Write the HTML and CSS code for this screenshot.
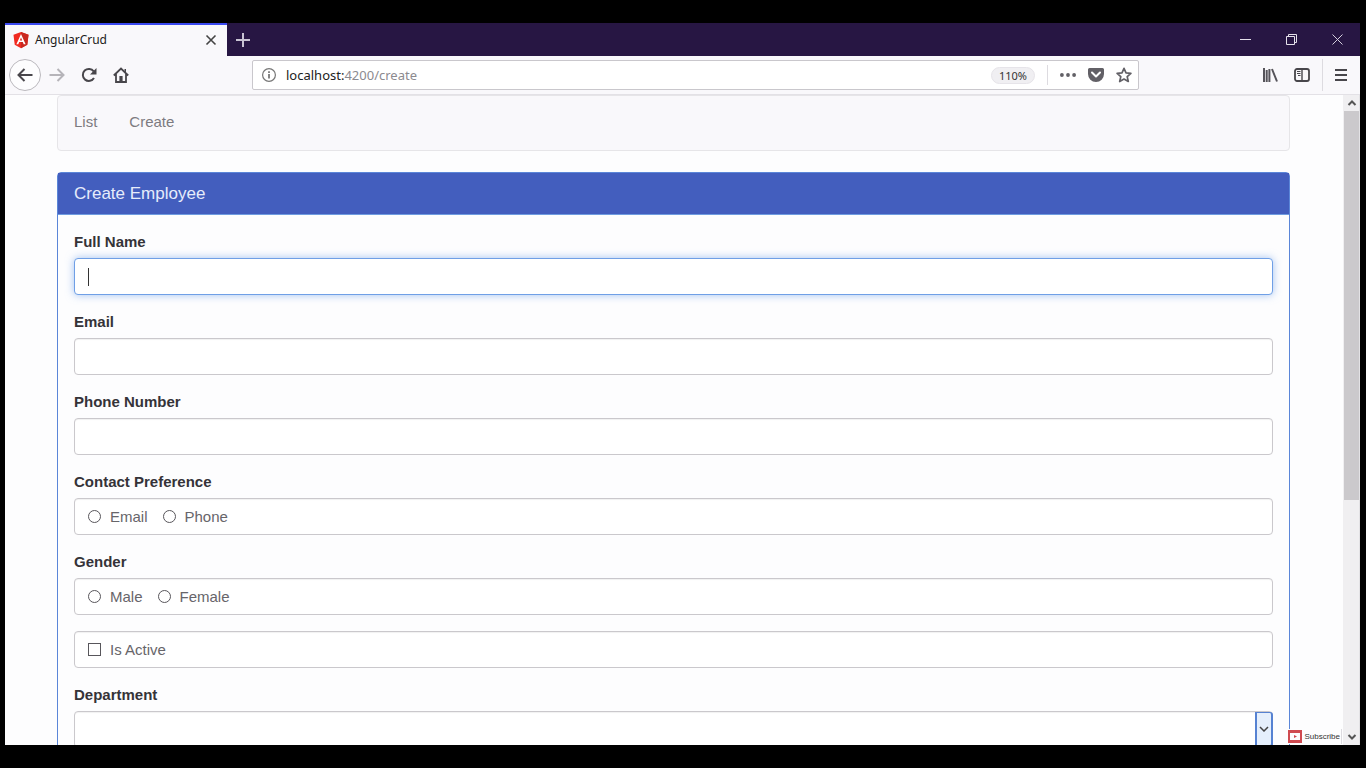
FILE: index.html
```html
<!DOCTYPE html>
<html lang="en">
<head>
<meta charset="utf-8">
<title>AngularCrud</title>
<link rel="stylesheet" href="styles.css">
</head>
<body>
<div class="window">
  <header class="tabstrip">
    <div class="tab">
      <svg class="tab-logo" width="16" height="18" viewBox="0 0 16 18"><path fill="#f02a20" d="M8 1l7.500 2.700-1.200 10L8 17.200l-6.300-3.500L.5 3.700z"/><path fill="#c9281f" d="M8 1l7.500 2.700-1.200 10L8 17.200z"/><path fill="#fff" fill-rule="evenodd" d="M8 3l4.600 10.200h-1.900l-.9-2.300H6.200l-.9 2.300H3.400zM8 6.400L6.800 9.400h2.400z"/></svg>
      <span class="tab-title">AngularCrud</span>
      <button class="icon-btn tab-close" aria-label="Close tab"><svg width="12" height="12" viewBox="0 0 12 12"><path d="M1.500 1.500l9 9m0-9l-9 9" stroke="#444" stroke-width="1.600"/></svg></button>
    </div>
    <button class="icon-btn new-tab" aria-label="New tab"><svg width="14" height="14" viewBox="0 0 14 14"><path d="M7 0v14M0 7h14" stroke="#c9c4d3" stroke-width="2"/></svg></button>
    <div class="window-controls">
      <button class="icon-btn" aria-label="Minimize"><svg width="11" height="11" viewBox="0 0 11 11"><path d="M0 5.500h11" stroke="#e4e0ea"/></svg></button>
      <button class="icon-btn" aria-label="Restore"><svg width="11" height="11" viewBox="0 0 11 11"><path d="M.5 2.500h8v8h-8zM2.500 2.500v-2h8v8h-2" fill="none" stroke="#e4e0ea"/></svg></button>
      <button class="icon-btn" aria-label="Close"><svg width="11" height="11" viewBox="0 0 11 11"><path d="M.5.5l10 10m0-10l-10 10" stroke="#d4cfdc"/></svg></button>
    </div>
  </header>
  <div class="toolbar">
    <div class="nav-buttons">
      <button class="icon-btn back" aria-label="Back"><svg width="16" height="14" viewBox="0 0 16 14"><path d="M15.500 7H1.500M7.500 1l-6 6 6 6" fill="none" stroke="#48464b" stroke-width="2"/></svg></button>
      <button class="icon-btn" aria-label="Forward"><svg width="16" height="14" viewBox="0 0 16 14"><path d="M.5 7h14M8.500 1l6 6-6 6" fill="none" stroke="#b6b4b9" stroke-width="2"/></svg></button>
      <button class="icon-btn" aria-label="Reload"><svg width="16" height="16" viewBox="0 0 16 16"><path d="M12.700 4.400A6 6 0 1 0 13 11" fill="none" stroke="#48464b" stroke-width="2"/><path d="M15.500 1v6.500H9z" fill="#48464b"/></svg></button>
      <button class="icon-btn" aria-label="Home"><svg width="16" height="16" viewBox="0 0 16 16"><path d="M.8 8.500L8 1.500l7.200 7M3 7v8h10V7" fill="none" stroke="#48464b" stroke-width="1.800"/><path d="M6.400 9h3.200v6H6.400zM11.500 2H13v3.500l-1.500-1.300z" fill="#48464b"/></svg></button>
    </div>
    <div class="urlbar">
      <svg width="16" height="16" viewBox="0 0 16 16"><circle cx="8" cy="8" r="6.400" fill="none" stroke="#777" stroke-width="1.200"/><path d="M8 7v4.500M8 4.200v1.700" stroke="#666" stroke-width="1.600"/></svg>
      <span class="url">localhost:<span class="url-path">4200/create</span></span>
      <button class="zoom">110%</button>
      <span class="url-divider"></span>
      <div class="url-actions">
        <button class="icon-btn" aria-label="Page actions"><svg width="16" height="16" viewBox="0 0 16 16" fill="#626066"><circle cx="1.900" cy="8" r="1.900"/><circle cx="8" cy="8" r="1.900"/><circle cx="14.100" cy="8" r="1.900"/></svg></button>
        <button class="icon-btn" aria-label="Save to Pocket"><svg width="16" height="16" viewBox="0 0 16 16"><path fill="#626066" d="M1.500 1h13A1.500 1.500 0 0 1 16 2.500V7A8 8 0 0 1 0 7V2.500A1.500 1.500 0 0 1 1.500 1z"/><path d="M4 5.500l4 4 4-4" fill="none" stroke="#fff" stroke-width="2" stroke-linecap="round" stroke-linejoin="round"/></svg></button>
        <button class="icon-btn" aria-label="Bookmark"><svg width="16" height="16" viewBox="0 0 16 16"><path d="M8 1.300l2 4.500 4.900.5-3.700 3.300 1.100 4.900L8 12l-4.300 2.500 1.100-4.900L1.100 6.300 6 5.800z" fill="none" stroke="#626066" stroke-width="1.700" stroke-linejoin="round"/></svg></button>
      </div>
    </div>
    <div class="tools">
      <button class="icon-btn" aria-label="Library"><svg width="16" height="14" viewBox="0 0 16 14"><path d="M2 0v14M4.700 2v12M7.400 1v13M10 1l5 12.500" stroke="#56545a" stroke-width="2"/></svg></button>
      <button class="icon-btn" aria-label="Sidebars"><svg width="16" height="14" viewBox="0 0 16 14"><rect x="1" y="1" width="14" height="12" rx="2" fill="none" stroke="#48464b" stroke-width="1.800"/><path d="M8 1v12" stroke="#48464b" stroke-width="1.400"/><path d="M3 3.500h3.500M3 5.500h3.500M4 7.500h2.500" stroke="#48464b"/></svg></button>
      <button class="icon-btn menu" aria-label="Menu"><svg width="12" height="14" viewBox="0 0 12 14"><path d="M0 2h12M0 7h12M0 12h12" stroke="#48464b" stroke-width="2"/></svg></button>
    </div>
  </div>
  <div class="viewport">
    <main class="page">
      <nav class="navbar">
        <a href="#list">List</a>
        <a href="#create">Create</a>
      </nav>
      <form class="panel">
        <h1 class="panel-heading">Create Employee</h1>
        <div class="panel-body">
          <div class="form-group">
            <label class="field-label" for="fullName">Full Name</label>
            <input class="control focused" id="fullName" type="text">
          </div>
          <div class="form-group">
            <label class="field-label" for="email">Email</label>
            <input class="control" id="email" type="text">
          </div>
          <div class="form-group">
            <label class="field-label" for="phone">Phone Number</label>
            <input class="control" id="phone" type="text">
          </div>
          <div class="form-group" role="radiogroup" aria-labelledby="contactLabel">
            <span class="field-label" id="contactLabel">Contact Preference</span>
            <div class="control choices">
              <label class="choice"><input type="radio" name="contact" value="email">Email</label>
              <label class="choice"><input type="radio" name="contact" value="phone">Phone</label>
            </div>
          </div>
          <div class="form-group" role="radiogroup" aria-labelledby="genderLabel">
            <span class="field-label" id="genderLabel">Gender</span>
            <div class="control choices">
              <label class="choice"><input type="radio" name="gender" value="male">Male</label>
              <label class="choice"><input type="radio" name="gender" value="female">Female</label>
            </div>
          </div>
          <div class="form-group">
            <div class="control choices">
              <label class="choice"><input type="checkbox" name="active">Is Active</label>
            </div>
          </div>
          <div class="form-group">
            <label class="field-label" for="department">Department</label>
            <div class="select-wrap">
              <select class="control" id="department"><option></option></select>
              <span class="select-arrow"><svg width="10" height="6" viewBox="0 0 10 6"><path d="M1 1l4 4 4-4" fill="none" stroke="#444" stroke-width="1.500"/></svg></span>
            </div>
          </div>
        </div>
      </form>
    </main>
    <div class="scrollbar">
      <span class="scroll-end"><svg width="10" height="8" viewBox="0 0 10 8"><path d="M1.500 6L5 2.500 8.500 6" fill="none" stroke="#555" stroke-width="2"/></svg></span>
      <span class="scroll-track"><span class="scroll-thumb"></span></span>
      <span class="scroll-end"><svg width="10" height="8" viewBox="0 0 10 8"><path d="M1.500 2L5 5.500 8.500 2" fill="none" stroke="#555" stroke-width="2"/></svg></span>
    </div>
    <a class="subscribe" href="#subscribe"><svg width="14" height="13" viewBox="0 0 14 13"><path fill="#cf4a50" fill-rule="evenodd" d="M0 0h14v13H0zM2 3v7h10V3z"/><path fill="#cf4a50" d="M6 5l3 1.500L6 8z"/></svg>Subscribe</a>
  </div>
</div>
</body>
</html>
```
FILE: styles.css
```css
* { box-sizing: border-box; }

body {
  margin: 0;
  height: 100vh;
  padding: 23px 6px 23px 5px;
  background: #000;
  font-family: "Liberation Sans", Arial, sans-serif;
  font-size: 15px;
}

button { font: inherit; }

.window {
  height: 100%;
  display: flex;
  flex-direction: column;
  overflow: hidden;
  background: #fdfdfe;
}

.icon-btn {
  display: flex;
  align-items: center;
  justify-content: center;
  padding: 0;
  border: 0;
  background: none;
}

.tabstrip {
  flex: none;
  display: flex;
  height: 33px;
  background: #271643;
}

.tab {
  display: flex;
  align-items: center;
  width: 222px;
  padding: 0 10px 2px 8px;
  gap: 6px;
  border-top: 2px solid #3a49f0;
  background: #f9f8fb;
  font-family: "Noto Sans", sans-serif;
  font-size: 12px;
  color: #1c1b20;
}

.tab-title { flex: 1; }

.new-tab { width: 32px; }

.window-controls {
  display: flex;
  margin-left: auto;
}

.window-controls .icon-btn { width: 46px; }

.toolbar {
  flex: none;
  display: flex;
  align-items: center;
  height: 39px;
  background: #f9f8fb;
  border-bottom: 1px solid #e3e1e6;
}

.nav-buttons {
  display: flex;
  align-items: center;
  width: 247px;
  padding-left: 4px;
}

.nav-buttons .icon-btn {
  width: 32px;
  height: 32px;
}

.nav-buttons .back {
  border: 1px solid #bbb9be;
  border-radius: 50%;
  background: #fdfdfe;
}

.urlbar {
  flex: 1;
  display: flex;
  align-items: center;
  height: 30px;
  padding: 0 6px 0 8px;
  border: 1px solid #c9c7cc;
  border-radius: 2px;
  background: #fff;
  font-family: "Noto Sans", sans-serif;
}

.url {
  flex: 1;
  padding-left: 9px;
  font-size: 13px;
  color: #222;
}

.url-path { color: #8c8a8f; }

.zoom {
  width: 44px;
  height: 17px;
  padding: 0;
  border: 1px solid #e6e4e9;
  border-radius: 9px;
  background: #f0eff2;
  font-size: 11px;
  line-height: 15px;
  color: #333;
}

.url-divider {
  width: 1px;
  height: 20px;
  margin: 0 12px;
  background: #dddbe0;
}

.url-actions {
  display: flex;
  gap: 12px;
}

.tools {
  display: flex;
  align-items: center;
  gap: 16px;
  width: 221px;
  padding-right: 13px;
  justify-content: flex-end;
}

.tools .menu {
  height: 32px;
  padding-left: 12px;
  border-left: 1px solid #dddbe0;
  margin-left: -4px;
}

.viewport {
  position: relative;
  flex: 1;
  display: flex;
  min-height: 0;
}

.page {
  flex: 1;
  overflow: hidden;
  padding: 0 53px 0 52px;
}

.navbar {
  display: flex;
  gap: 32px;
  height: 56px;
  padding: 0 16px;
  line-height: 52px;
  border: 1px solid #e6e5e8;
  border-radius: 4px;
  background: #f9f8fb;
}

.navbar a {
  color: #7d7b80;
  text-decoration: none;
}

.panel {
  margin-top: 21px;
  border: 1px solid #5b86d8;
  border-radius: 4px;
}

.panel-heading {
  margin: 0;
  padding: 0 16px;
  border-bottom: 1px solid #6f9ce0;
  background: #435ebe;
  color: #e6ecfb;
  font-size: 17px;
  font-weight: 400;
  line-height: 41px;
}

.panel-body { padding: 16px; }

.form-group { margin-bottom: 16px; }

.field-label {
  display: block;
  margin-bottom: 5px;
  line-height: 22px;
  font-weight: 700;
  color: #353338;
}

.control {
  display: block;
  width: 100%;
  height: 37px;
  padding: 0 13px;
  border: 1px solid #cac8cc;
  border-radius: 4px;
  background: #fff;
  color: #67656a;
  font: inherit;
  box-shadow: inset 0 1px 1px rgba(0, 0, 0, 0.06);
  outline: 0;
  appearance: none;
}

.focused {
  border-color: #6f9fe6;
  background: linear-gradient(#333, #333) 13px 9px / 1px 18px no-repeat #fff;
  box-shadow: 0 0 8px rgba(102, 155, 233, 0.6);
}

.choices {
  display: flex;
  align-items: center;
  gap: 15px;
}

.choice {
  display: flex;
  align-items: center;
  gap: 9px;
}

.choice input {
  appearance: none;
  width: 13px;
  height: 13px;
  margin: 0;
  border: 1px solid #58565b;
  background: #fff;
}

.choice input[type="radio"] { border-radius: 50%; }

.select-wrap { position: relative; }

.select-arrow {
  position: absolute;
  top: 1px;
  right: 0;
  bottom: 1px;
  display: flex;
  align-items: center;
  justify-content: center;
  width: 18px;
  border: 2px solid #5682d2;
  border-top-width: 1px;
  border-radius: 0 3px 3px 0;
  background: #e5effc;
  pointer-events: none;
}

.scrollbar {
  display: flex;
  flex-direction: column;
  width: 17px;
  background: #f0eff1;
  border-left: 1px solid #f0eff1;
  border-right: 1px solid #e3e2e5;
}

.scroll-end {
  display: flex;
  align-items: center;
  justify-content: center;
  height: 16px;
}

.scroll-track { flex: 1; }

.scroll-thumb {
  display: block;
  height: 63%;
  background: #cbc9cc;
}

.subscribe {
  position: absolute;
  right: 18px;
  bottom: 1px;
  display: flex;
  align-items: center;
  gap: 2px;
  height: 15px;
  padding-right: 1px;
  border-right: 1px solid #dddbe0;
  color: #333;
  font-family: "Liberation Sans Narrow", "Liberation Sans", sans-serif;
  font-size: 8px;
  text-decoration: none;
  background: #fdfdfe;
}
```
